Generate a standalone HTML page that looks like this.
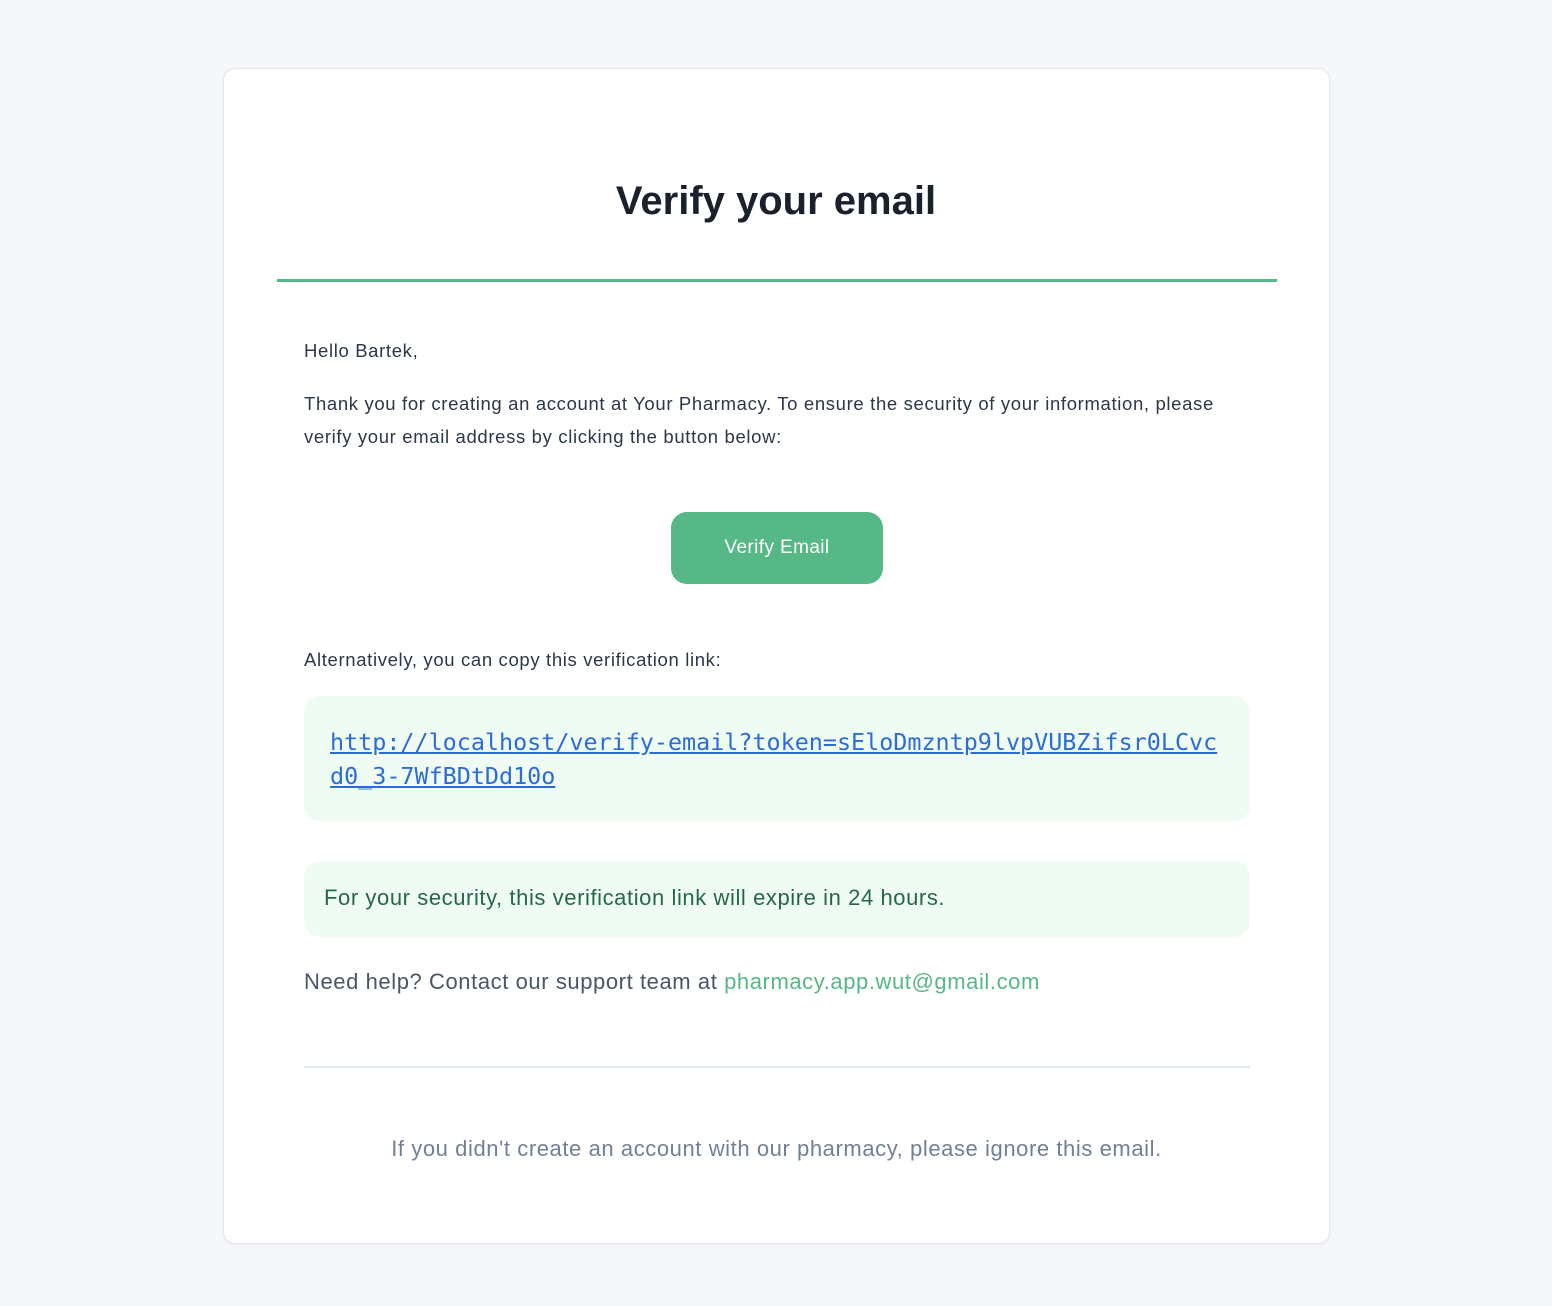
<!DOCTYPE html>
<html><head><meta charset="utf-8"><style>
*{margin:0;padding:0;box-sizing:border-box}
body{width:1552px;height:1306px;background:#f5f7fa;font-family:"Liberation Sans",Arial,sans-serif;position:relative;overflow:hidden}
.card{position:absolute;left:223px;top:68px;width:1107px;height:1176px;background:#fff;border:1px solid #e2e6ec;border-radius:12px;box-shadow:0 1px 3px rgba(0,0,0,0.05)}
.a{position:absolute;white-space:nowrap}
.b{font-size:18.5px;letter-spacing:0.65px;color:#2d3748}
.l{font-size:22px;letter-spacing:0.58px;line-height:26px}
h1{position:absolute;left:0;width:100%;top:176px;text-align:center;font-size:40px;font-weight:bold;color:#1a202c;line-height:50px}
</style></head><body>
<div class="card"></div>
<h1>Verify your email</h1>
<div class="a" style="left:277px;top:279px;width:1000px;height:3px;background:#55b886"></div>
<div class="a b" style="left:304px;top:339px;line-height:24px">Hello Bartek,</div>
<div class="a b" style="left:304px;top:387px;line-height:33px">Thank you for creating an account at Your Pharmacy. To ensure the security of your information, please<br>verify your email address by clicking the button below:</div>
<div class="a" style="left:671px;top:512px;width:212px;height:72px;background:#55b886;border-radius:16px;color:#fff;font-size:19px;letter-spacing:0.4px;line-height:72px;text-align:center">Verify Email</div>
<div class="a b" style="left:304px;top:648px;line-height:24px">Alternatively, you can copy this verification link:</div>
<div class="a" style="left:304px;top:696px;width:946px;height:125px;background:#effcf3;border-radius:16px"></div>
<div class="a" style="left:330px;top:725px;font-family:'DejaVu Sans Mono','Liberation Mono',monospace;font-size:23.4px;line-height:34px;color:#2b6cd9;text-decoration:underline">http://localhost/verify-email?token=sEloDmzntp9lvpVUBZifsr0LCvc<br>d0_3-7WfBDtDd10o</div>
<div class="a" style="left:304px;top:861px;width:946px;height:76px;background:#effcf3;border-radius:16px"></div>
<div class="a l" style="left:324px;top:885px;color:#276749">For your security, this verification link will expire in 24 hours.</div>
<div class="a l" style="left:304px;top:969px;color:#4a5568">Need help? Contact our support team at <span style="color:#55b886">pharmacy.app.wut@gmail.com</span></div>
<div class="a" style="left:304px;top:1066px;width:946px;height:2px;background:#e2e8f0"></div>
<div class="a l" style="left:223px;width:1107px;top:1136px;text-align:center;color:#718096">If you didn't create an account with our pharmacy, please ignore this email.</div>
</body></html>
